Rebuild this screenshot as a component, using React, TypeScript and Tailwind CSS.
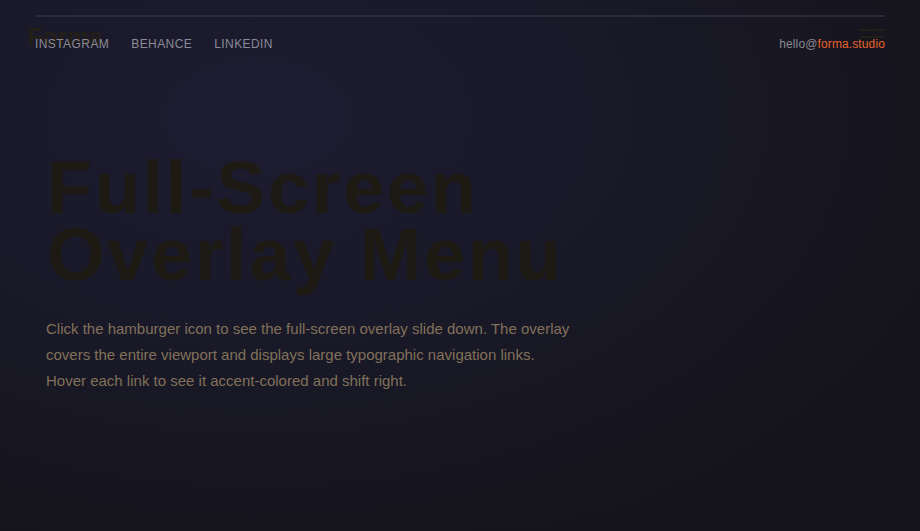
import React from "react";

export default function App() {
  return (
    <div className="relative w-full h-[531px] overflow-hidden bg-[radial-gradient(ellipse_at_28%_22%,#1d1c31_0%,#1a1929_35%,#16151e_70%,#141319_100%)] font-['Liberation_Sans',Arial,sans-serif]">
      {/* page header (behind overlay) */}
      <header className="flex items-center justify-between pl-[28px] pr-[36px] pt-[21px]">
        <div className="text-[24px] leading-[32px] font-semibold text-[#231f17] tracking-[0.01em]">Forma</div>
        <div className="flex flex-col gap-[5px] w-[24px]">
          <span className="block h-[2px] w-full bg-[#221f19]" />
          <span className="block h-[2px] w-full bg-[#221f19]" />
          <span className="block h-[2px] w-full bg-[#221f19]" />
        </div>
      </header>

      <main className="pl-[45px] mt-[102px]">
        <h1 className="ml-[2px] text-[74px] leading-[0.9] font-bold text-[#1c1a13] tracking-[0.035em]">
          Full-Screen
          <br />
          Overlay Menu
        </h1>
        <p className="mt-[28px] ml-px max-w-[530px] text-[15px] leading-[26px] text-[#81715a]">
          Click the hamburger icon to see the full-screen overlay slide down. The overlay covers the entire viewport and displays large typographic navigation links. Hover each link to see it accent-colored and shift right.
        </p>
      </main>

      {/* overlay footer sliding in */}
      <div className="absolute inset-x-0 top-0 px-[35px] pt-[15px]">
        <div className="border-t-2 border-[#2b2a38] flex items-center justify-between pt-[19px]">
          <nav className="flex items-center gap-[22px] text-[12px] leading-[16px] tracking-[0.035em] text-[#8a8a96] uppercase">
            <span>Instagram</span>
            <span>Behance</span>
            <span>LinkedIn</span>
          </nav>
          <div className="text-[12px] leading-[16px] tracking-[0.01em] text-[#8a8993]">
            hello@<span className="text-[#e6622c]">forma.studio</span>
          </div>
        </div>
      </div>
    </div>
  );
}
